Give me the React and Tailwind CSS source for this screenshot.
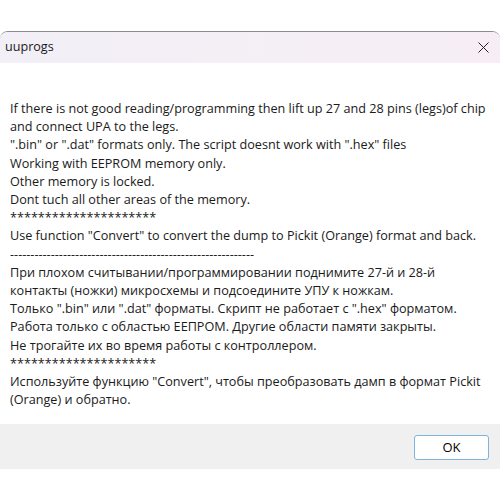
export default function App() {
  const lines = [
    'If there is not good reading/programming then lift up 27 and 28 pins (legs)of chip',
    'and connect UPA to the legs.',
    '".bin" or ".dat" formats only. The script doesnt work with ".hex" files',
    'Working with EEPROM memory only.',
    'Other memory is locked.',
    'Dont tuch all other areas of the memory.',
    '*********************',
    'Use function "Convert" to convert the dump to Pickit (Orange) format and back.',
    '------------------------------------------------------------',
    'При плохом считывании/программировании поднимите 27-й и 28-й',
    'контакты (ножки) микросхемы и подсоедините УПУ к ножкам.',
    'Только ".bin" или ".dat" форматы. Скрипт не работает с ".hex" форматом.',
    'Работа только с областью ЕЕПРОМ. Другие области памяти закрыты.',
    'Не трогайте их во время работы с контроллером.',
    '*********************',
    'Используйте функцию "Convert", чтобы преобразовать дамп в формат Pickit',
    '(Orange) и обратно.',
  ];

  return (
    <div className="w-[500px] h-[500px] bg-white pt-[31px] font-['Open_Sans',sans-serif] text-[#1a1a1a]">
      <div className="border-t border-[#8c8c8c] rounded-t-[8px] overflow-hidden">
        {/* title bar */}
        <div className="h-[31px] flex items-center justify-between pl-[5px] pr-[11px] bg-gradient-to-r from-[#f2eff6] to-[#f7eef5]">
          <span className="text-[12.6px]">uuprogs</span>
          <svg width="11" height="11" viewBox="0 0 11 11" className="text-[#222]">
            <path d="M0.5 0.5 L10.5 10.5 M10.5 0.5 L0.5 10.5" stroke="currentColor" strokeWidth="1" fill="none" />
          </svg>
        </div>

        {/* message */}
        <div className="h-[361px] pt-[36px] pl-[10px] text-[12.65px] leading-[18.2px] whitespace-pre">
          {lines.map((l, i) => (
            <div key={i}>{l}</div>
          ))}
        </div>

        {/* buttons */}
        <div className="h-[45px] bg-[#f0f0f0] flex items-center justify-end pr-[11px]">
          <button className="w-[75px] h-[25px] mt-[2px] bg-white border border-[#7fb4dc] rounded-[3px] text-[13px] text-black">
            OK
          </button>
        </div>
      </div>
    </div>
  );
}
